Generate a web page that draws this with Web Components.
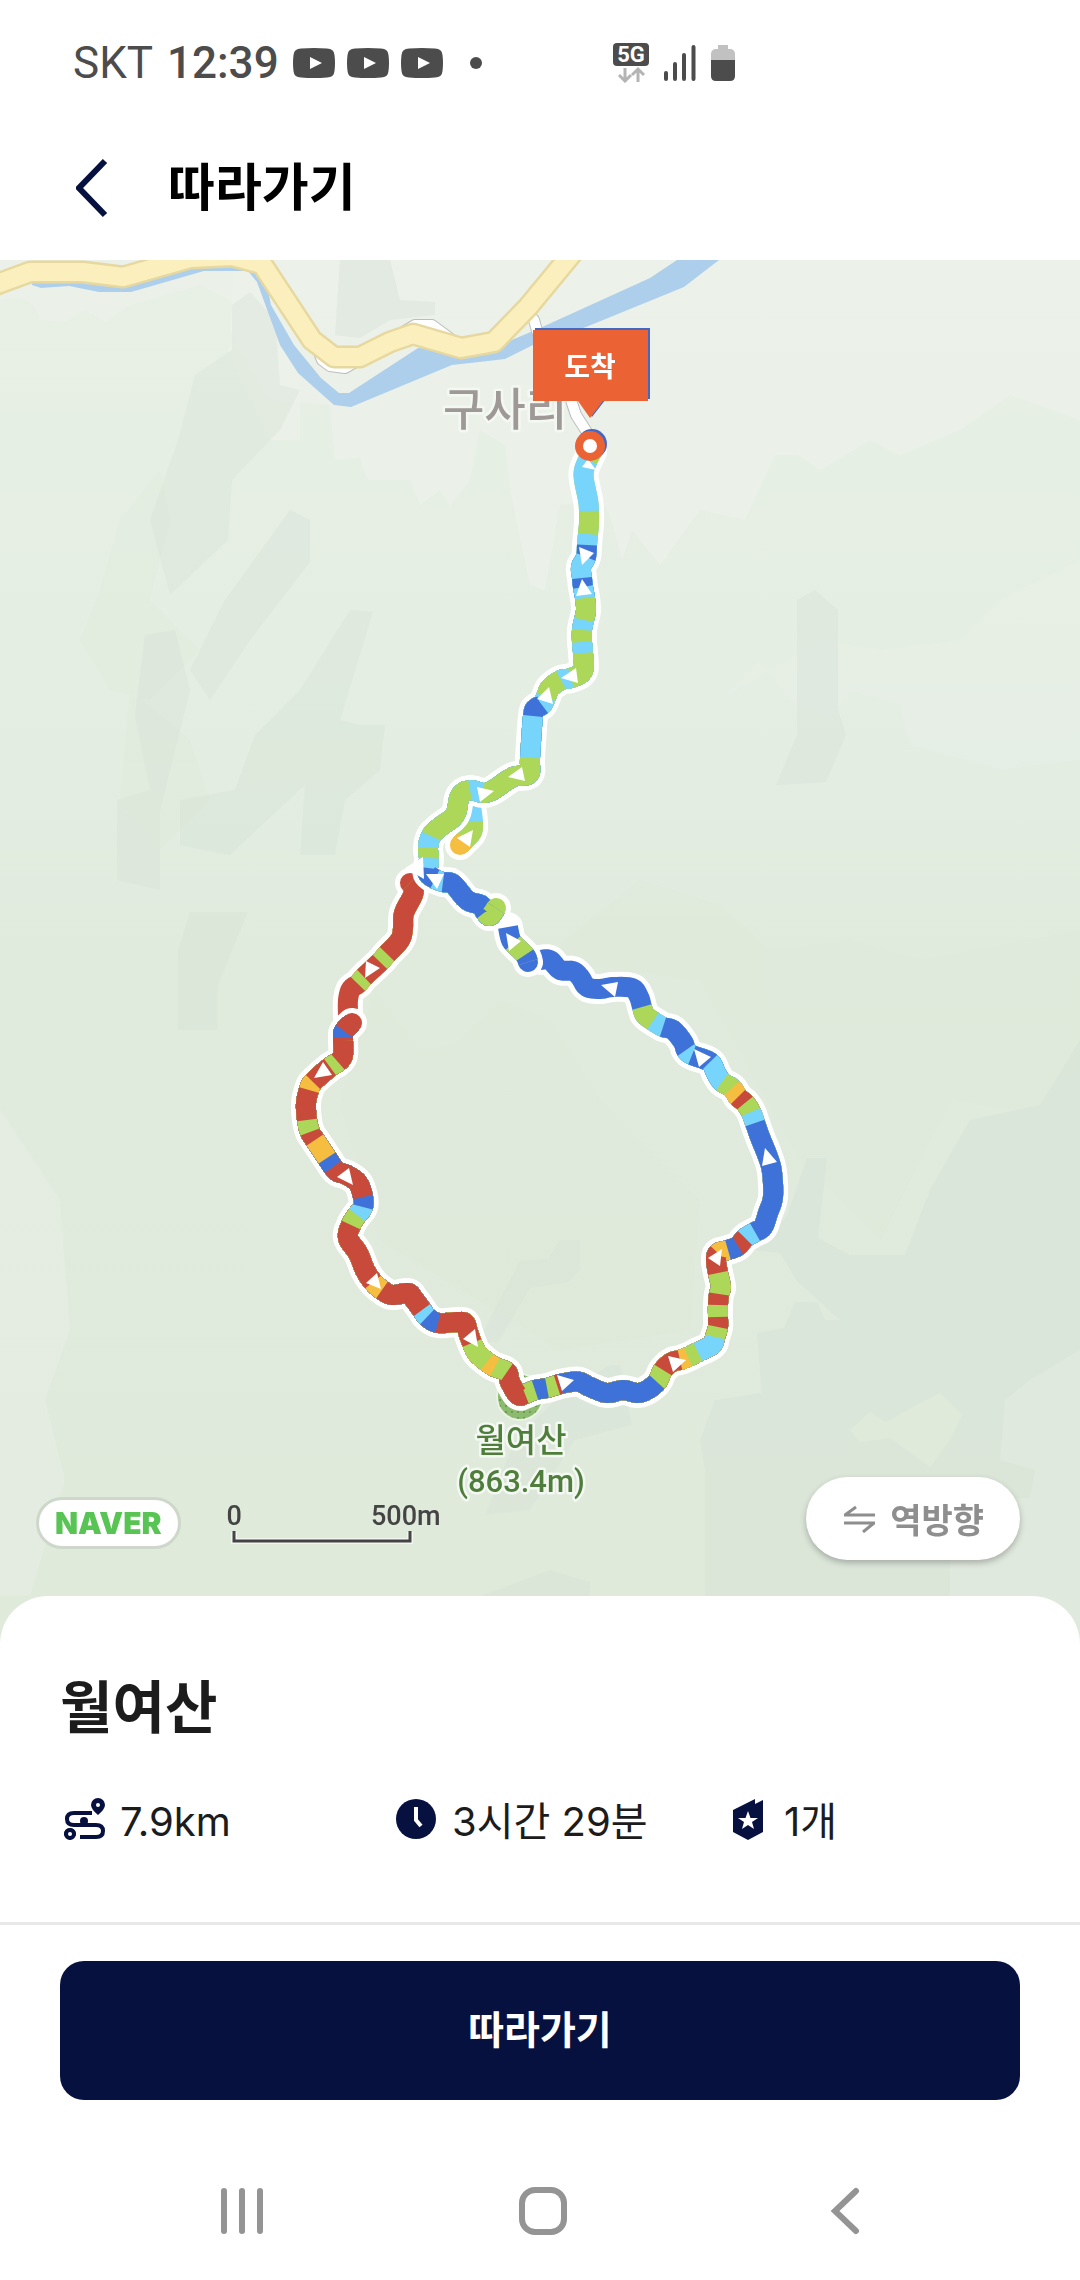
<!DOCTYPE html>
<html lang="ko">
<head>
<meta charset="utf-8">
<meta name="viewport" content="width=device-width, initial-scale=1">
<title>따라가기</title>
<style>
  body {
    margin: 0;
    background: #fff;
    font-family: Inter, "Noto Sans CJK KR", sans-serif;
    color: #1c1c1c;
  }
</style>
</head>
<body>
<follow-screen>
  <status-bar slot="top" carrier="SKT" time="12:39"></status-bar>
  <page-header slot="top">따라가기</page-header>
  <route-map slot="map"></route-map>
  <route-sheet slot="sheet">
    <span slot="title">월여산</span>
    <route-stat icon="distance">7.9km</route-stat>
    <route-stat icon="time">3시간 29분</route-stat>
    <route-stat icon="badge">1개</route-stat>
  </route-sheet>
  <action-bar slot="bottom">따라가기</action-bar>
  <system-nav slot="bottom"></system-nav>
</follow-screen>

<script>
// page frame: the map takes whatever height the bars leave
customElements.define("follow-screen", class extends HTMLElement {
  connectedCallback() {
    this.attachShadow({mode: 'open'});
    this.shadowRoot.innerHTML = `
    <style>
      :host { display: flex; flex-direction: column; min-height: 100vh; }
      main { flex: 1; display: flex; flex-direction: column; }
      ::slotted(route-map) { flex: 1; }
    </style>
    <slot name="top"></slot>
    <main>
      <slot name="map"></slot>
      <slot name="sheet"></slot>
    </main>
    <slot name="bottom"></slot>
    `;
  }
});

customElements.define("status-bar", class extends HTMLElement {
  connectedCallback() {
    const video = `
      <svg width="42" height="30" viewBox="0 0 42 30">
        <path d="M8 0.5Q21 -0.5 34 0.5Q41 0.5 41.500 7Q42.500 15 41.500 23Q41 29.500 34 29.500Q21 30.500 8 29.500Q1 29.500 0.500 23Q-0.500 15 0.500 7Q1 0.500 8 0.500Z" fill="#4c4c4c"/>
        <path d="M17 9L29 15L17 21Z" fill="#fff"/>
      </svg>`;
    this.attachShadow({mode: 'open'});
    this.shadowRoot.innerHTML = `
    <style>
      :host {
        display: flex;
        align-items: center;
        height: 126px;
        padding: 0 73px;
        font: 44px Roboto, sans-serif;
        color: #4c4c4c;
      }
      .time { font-weight: 500; margin: 0 14px; }
      .videos { display: flex; gap: 12px; margin-right: 27px; }
      .signals { display: flex; align-items: center; gap: 15px; margin-left: 131px; }
    </style>
    <span>${this.getAttribute('carrier')}</span>
    <span class="time">${this.getAttribute('time')}</span>
    <span class="videos">${video}${video}${video}</span>
    <svg width="12" height="12" viewBox="0 0 12 12"><circle cx="6" cy="6" r="6" fill="#4c4c4c"/></svg>
    <span class="signals">
      <svg width="36" height="40" viewBox="0 0 36 40">
        <rect width="36" height="23" rx="4" fill="#4c4c4c"/>
        <text x="18" y="19" text-anchor="middle" font-family="Roboto, sans-serif" font-size="22" font-weight="700" fill="#fff">5G</text>
        <path d="M12 25V38M6 32L12 38L18 32M25 39V26M19 32L25 26L31 32" fill="none" stroke="#b4b4b4" stroke-width="3"/>
      </svg>
      <svg width="32" height="36" viewBox="0 0 32 36">
        <path d="M2 28V34M11 19V34M20 10V34M29.500 2V34" stroke="#4c4c4c" stroke-width="4" stroke-linecap="round"/>
      </svg>
      <svg width="24" height="36" viewBox="0 0 24 36">
        <path d="M7 0H17V4H20Q24 5 24 9V16H0V9Q0 5 4 4H7Z" fill="#c1c1c1"/>
        <path d="M0 15H24V31Q24 36 19 36H5Q0 36 0 31Z" fill="#4c4c4c"/>
      </svg>
    </span>
    `;
  }
});

customElements.define("page-header", class extends HTMLElement {
  connectedCallback() {
    this.attachShadow({mode: 'open'});
    this.shadowRoot.innerHTML = `
    <style>
      :host {
        display: flex;
        align-items: center;
        gap: 32px;
        height: 124px;
        padding: 0 60px 10px;
      }
      button { display: flex; padding: 8px 16px; border: 0; background: none; cursor: pointer; }
      h1 { margin: 0; font-size: 51px; font-weight: 700; line-height: 72px; color: #000; }
    </style>
    <button aria-label="뒤로">
      <svg width="44" height="60" viewBox="0 0 44 60"><path d="M29 3L3 30L29 57" fill="none" stroke="#06113f" stroke-width="6"/></svg>
    </button>
    <h1><slot></slot></h1>
    `;
  }
});

const COLORS = {
  r: '#c84a3a',
  o: '#f5be41',
  g: '#acd759',
  c: '#77d4fb',
  b: '#3f72d8'
};

// each leg is a run of coloured parts, a part begins where the one before it ends
const LEGS = [
  `c 471,806 473,822 | g 472,832 465,840 | o 460,845`,

  `r 348,1016 348,1000 351,989 358,984 | g 364,977 | r 380,962 | g 387,954 |
   r 400,940 403,928 404,913 413,895 413,887 410,883`,

  `b 540,960 550,960 560,970 573,971 580,977 587,987 600,989 613,987 632,988 639,997 642,1007 |
   g 645,1015 653,1021 | c 663,1027 | b 673,1030 683,1042 686,1050 | c 692,1055 | b 710,1062 |
   c 716,1073 722,1082 | g 732,1088 | o 738,1097 | r 745,1103 | g 751,1112 | c 755,1123 |
   b 760,1137 768,1157 772,1172 773,1197 768,1213 763,1227 755,1232 | c 745,1238 | r 738,1246 |
   b 728,1250 | o 718,1253 | r 716,1260 718,1273 | g 721,1287 719,1294 | r 718,1305 | g 718,1317 |
   r 718,1327 | g 715,1337 | c 712,1345 698,1352 | g 688,1357 | o 680,1360 | r 672,1362 663,1370 |
   g 657,1382 | b 647,1390 637,1393 623,1390 607,1393 590,1387 580,1382 571,1382 560,1384 |
   r 557,1385 | g 547,1388 | b 535,1390 | g 525,1394 | r 518,1395 510,1382 507,1372 | g 495,1367 |
   o 487,1362 | g 477,1353 472,1343 | r 468,1332 465,1323 457,1322 438,1323 | b 427,1317 |
   c 422,1310 | r 413,1298 408,1293 392,1295 382,1290 | o 373,1282 | r 365,1270 358,1253 348,1238 351,1225 |
   g 357,1215 | c 363,1207 | b 363,1197 | r 358,1183 347,1175 338,1172 333,1167 | b 327,1158 |
   o 315,1140 | r 310,1132 | g 307,1120 | r 306,1103 309,1090 | o 313,1082 | r 330,1067 |
   g 338,1062 | r 343,1055 343,1038 | b 344,1031 | r 352,1023`,

  `b 508,927 510,937 513,943 | g 525,955 | b 528,962`,

  `g 592,452 588,460 | c 584,470 584,480 588,500 589,511 | g 589,523 588,534 | c 587,545 | b 586,557 |
   c 581,567 582,578 | b 583,587 | c 585,598 | g 586,610 584,620 | c 582,630 | g 582,642 | c 583,653 |
   g 583,671 571,678 | c 561,680 | g 550,688 546,697 | c 542,705 | b 536,708 533,716 | c 530,758 |
   g 529,774 513,777 493,790 483,793 | c 470,790 | g 460,796 455,815 440,827 431,836 | c 428,848 |
   g 429,858 | c 428,868 | b 428,874 435,879 | c 443,882 | b 453,884 467,900 481,905 485,912 |
   g 490,916 496,908`
];

const ARROWS = [
  '582,467 588,459 596,470', '579,547 594,553 582,565', '582,579 592,594 576,596',
  '561,678 576,668 578,683', '537,699 549,687 553,704', '508,777 522,767 525,781',
  '477,787 494,791 480,802', '457,838 473,830 470,847', '405,868 423,857 424,879',
  '426,874 444,874 437,889', '366,961 380,968 365,978', '314,1078 323,1062 332,1075',
  '506,933 521,941 509,951', '337,1177 349,1168 353,1185', '366,1283 377,1273 381,1289',
  '463,1339 475,1329 478,1347', '557,1375 574,1380 562,1391', '601,985 618,982 615,997',
  '694,1049 711,1057 699,1067', '765,1148 777,1162 762,1166', '708,1258 722,1249 720,1266',
  '668,1356 686,1360 673,1372'
];

const STEPS = 5;

// Catmull-Rom: STEPS samples for every stretch between two points
let smooth = (pts) => {
  let out = [];
  for (let i = 0; i < pts.length - 1; i++) {
    let p0 = pts[Math.max(i - 1, 0)];
    let p1 = pts[i];
    let p2 = pts[i + 1];
    let p3 = pts[Math.min(i + 2, pts.length - 1)];
    for (let s = 0; s < STEPS; s++) {
      let t = s / STEPS;
      out.push([0, 1].map(k => (2 * p1[k] + (p2[k] - p0[k]) * t
        + (2 * p0[k] - 5 * p1[k] + 4 * p2[k] - p3[k]) * t * t
        + (3 * p1[k] - p0[k] - 3 * p2[k] + p3[k]) * t * t * t) / 2));
    }
  }
  out.push(pts[pts.length - 1]);
  return out;
}

let drawLeg = (leg) => {
  let points = [];
  let parts = leg.split('|').map(part => {
    let [color, ...pts] = part.trim().split(/\s+/);
    let start = Math.max(points.length - 1, 0);
    points.push(...pts.map(p => p.split(',').map(Number)));
    return {color, start};
  });
  let curve = smooth(points);
  let casing = `<polyline points="${curve.join(' ')}" stroke="#fff" stroke-width="30" stroke-linecap="round"/>`;
  // every part runs on to the end of the leg, the next one is painted over it
  let cores = parts.map(({color, start}) => {
    let line = curve.slice(start * STEPS).join(' ');
    return `<polyline points="${line}" stroke="${COLORS[color]}" stroke-width="20" stroke-linecap="butt"/>`;
  }).join('');
  // half disc that rounds off the far end
  let [x, y] = curve[curve.length - 1];
  let [px, py] = curve[curve.length - 2];
  let a = Math.atan2(y - py, x - px);
  let dx = -Math.sin(a) * 10, dy = Math.cos(a) * 10;
  let cap = `<path d="M${x - dx} ${y - dy}A10 10 0 0 1 ${x + dx} ${y + dy}Z" fill="${COLORS[parts[parts.length - 1].color]}"/>`;
  return casing + cores + cap;
}

customElements.define("route-map", class extends HTMLElement {
  connectedCallback() {
    this.attachShadow({mode: 'open'});
    this.shadowRoot.innerHTML = `
    <style>
      :host { display: flex; flex-direction: column; justify-content: flex-end; position: relative; min-height: 600px; background: #e2ebdf; }
      .canvas { position: absolute; inset: 0; width: 100%; height: 100%; }
      .canvas text { font-family: "Noto Sans CJK KR", sans-serif; text-anchor: middle; }
      .canvas .height { font-family: Roboto, sans-serif; }
      .halo { paint-order: stroke; stroke: #f4f8f2; stroke-width: 5px; stroke-linejoin: round; }
      .controls {
        position: relative;
        display: flex;
        align-items: flex-end;
        justify-content: space-between;
        padding: 0 60px 84px 36px;
      }
      .left { display: flex; align-items: center; gap: 46px; margin-bottom: 11px; }
      .naver {
        padding: 0 16px;
        border: 3px solid #cdd8cb;
        border-radius: 26px;
        background: #fff;
        font: 900 30px/46px Inter, sans-serif;
        color: #58c454;
        text-decoration: none;
      }
      .scale { font: 500 27px/28px Roboto, sans-serif; color: #444; }
      .scale div { display: flex; justify-content: space-between; width: 214px; }
      .scale svg { display: block; margin-left: 4px; }
      button {
        display: flex;
        align-items: center;
        gap: 15px;
        padding: 0 36px 0 38px;
        border: 0;
        border-radius: 42px;
        background: #fff;
        box-shadow: 0 3px 6px rgba(0, 0, 0, 0.25);
        font: 700 34px/83px "Noto Sans CJK KR", sans-serif;
        color: #8e8e8e;
        cursor: pointer;
      }
    </style>
    <svg class="canvas" viewBox="0 260 1080 1384" preserveAspectRatio="xMidYMin slice" role="img" aria-label="월여산 코스 지도">
      <defs>
        <linearGradient id="land" x1="0" y1="0" x2="0" y2="1">
          <stop offset="0" stop-color="#e8f0e6"/>
          <stop offset="0.3" stop-color="#e5eee3"/>
          <stop offset="0.5" stop-color="#e0ebde"/>
          <stop offset="1" stop-color="#dfeadb"/>
        </linearGradient>
        <pattern id="dots" width="6" height="6" patternUnits="userSpaceOnUse">
          <circle cx="2" cy="2" r="1" fill="#5f9348"/>
        </pattern>
      </defs>
      <rect y="260" width="1080" height="1384" fill="url(#land)"/>

      <!-- pale slopes -->
      <g fill="#ecf1ea">
        <path d="M235 260H1080V420L1010 395L960 430L900 455L870 440L820 470L798 455L775 455L745 520L700 510L660 565L632 530L622 560L610 515L600 500L560 505L545 590L530 585L512 500L505 445L480 430L470 480L450 506L440 490L420 505L410 480L368 480L360 458L335 460L330 405L270 400L230 330Z" opacity="0.8"/>
        <path d="M0 300Q35 292 40 320L65 322L85 310L105 322L130 305L200 285L230 300L240 330L228 350L270 440L300 440V260H0Z" opacity="0.7"/>
        <path d="M720 700L760 660L790 700L830 720L850 690L900 705L910 745L1000 770L1080 760V560L1000 600L960 640L880 650L820 640Z" opacity="0.3"/>
        <path d="M0 1110L60 1200L70 1330L45 1400L65 1480L30 1596H0Z" opacity="0.4"/>
      </g>
      <g fill="#dde9d7" opacity="0.3">
        <path d="M120 520L160 470L170 520L150 600L200 650L150 700L110 690L80 640L100 590Z"/>
        <path d="M130 690L190 740L210 800L160 850L120 800Z"/>
        <path d="M540 960L640 880L720 905L770 950L850 940L920 960L1080 930V1120L950 1100L880 1240L800 1160L700 980Z"/>
        <path d="M375 990L420 1050L455 1045L500 1000L550 1020L600 1100L700 1200L690 1330L560 1350L380 1240L340 1100Z"/>
      </g>

      <!-- shaded ridges -->
      <g fill="#d6e0d6" opacity="0.4">
        <path d="M340 260H390L400 300L435 302V315L390 320L360 338L335 335Z"/>
        <path d="M232 305L250 292L275 320L280 385L300 390L280 430L232 480L228 540L170 595L150 520L178 440L195 375L232 350Z" opacity="0.8"/>
        <path d="M290 510L310 520V562L250 640L210 700L190 670L225 600Z"/>
        <path d="M350 610L373 612L340 720L360 725L385 725L380 770L345 800L335 855H300L305 785L230 855L180 845V800L235 790L255 735L300 690Z" opacity="0.8"/>
        <path d="M145 635L175 630L190 690L160 810V890L117 880V800L150 790L135 715Z"/>
        <path d="M190 912L248 912L218 985L217 1030H178V950Z" opacity="0.8"/>
        <path d="M797 600L815 590L838 610V710L846 735L826 782L776 785L797 735Z"/>
        <path d="M478 1342L498 1342L530 1288L568 1282L580 1270V1240H560L548 1259L520 1261Z"/>
      </g>
      <g fill="#d8e3d8" opacity="0.65">
        <path d="M807 1158H827L818 1238L850 1255L905 1255L930 1190L970 1120L1040 1105L1080 1040V1644H705V1470L700 1440L715 1400L762 1393L757 1333L784 1328L795 1302H817L825 1320H840L820 1302L797 1281L780 1253L755 1250L787 1216Z"/>
        <path d="M480 1596L550 1570L590 1582V1644H480Z" opacity="0.7"/>
        <path d="M560 1395L610 1365H620L632 1425L575 1440L530 1510L485 1515L515 1440Z" opacity="0.7"/>
      </g>
      <path d="M850 1430L870 1412L885 1422L940 1393L962 1415L950 1440L930 1467L890 1438L860 1442Z" fill="#dfeadb"/>
      <path d="M950 1644V1500L1030 1498L1035 1470L1000 1460L1005 1400L1030 1380L1080 1350V1644Z" fill="#e2ebdf" opacity="0.6"/>

      <!-- river -->
      <path d="M30 272L32 285L41 288L69 286L99 292H131L204 271H248L257 282L280 345L298 373L334 405L351 407L452 365L505 359L537 343L586 327L684 287L719 260H677L650 278L540 328L500 345L461 350L418 348L349 393H339L321 378L294 345L271 305L262 260Z" fill="#aecfec"/>

      <!-- lanes -->
      <g fill="none" stroke-linejoin="round">
        <g stroke="#bdbdbd" stroke-width="12">
          <path d="M400 334L415 325L432 325L455 342"/>
          <path d="M316 345L322 360L330 366L345 368L362 358"/>
          <path d="M526 310L534 320L541 345M571 400L576 415L592 440"/>
        </g>
        <g stroke="#fff" stroke-width="10">
          <path d="M400 334L415 325L432 325L455 342"/>
          <path d="M316 345L322 360L330 366L345 368L362 358"/>
          <path d="M526 310L534 320L541 345M571 400L576 415L592 440"/>
        </g>
        <path d="M-10 287L0 283L30 272H83L123 277L190 258L232 256L262 264L312 340L334 357H360L390 342L413 334L461 348L494 342L528 307L575 250" stroke="#e6d89e" stroke-width="23"/>
        <path d="M-10 287L0 283L30 272H83L123 277L190 258L232 256L262 264L312 340L334 357H360L390 342L413 334L461 348L494 342L528 307L575 250" stroke="#fbf0bd" stroke-width="18"/>
      </g>

      <text class="halo" x="505" y="426" font-size="45" font-weight="500" fill="#9e9997">구사리</text>

      <!-- summit -->
      <circle cx="520" cy="1397" r="23" fill="#8cba6e" stroke="#e9f2e4" stroke-width="2"/>
      <circle cx="520" cy="1397" r="22" fill="url(#dots)"/>
      <text class="halo" x="521" y="1452" font-size="33" font-weight="500" fill="#4f7d3c">월여산</text>
      <text class="halo height" x="521" y="1492" font-size="31" font-weight="500" fill="#4f7d3c">(863.4m)</text>

      <g fill="none" stroke-linejoin="round">${LEGS.map(drawLeg).join('')}</g>
      <g fill="#fff">${ARROWS.map(points => `<polygon points="${points}"/>`).join('')}</g>

      <!-- start pin sits under the finish pin -->
      <g fill="#4468c0">
        <path d="M535 328H650V399H606L592 417L580 399H535Z"/>
        <circle cx="592" cy="444" r="15"/>
      </g>
      <g fill="#eb6235">
        <path d="M533 330H648V401H603L590 418L578 401H533Z"/>
        <circle cx="590" cy="446" r="15"/>
      </g>
      <circle cx="590" cy="446" r="7" fill="#fff"/>
      <text x="590" y="377" font-size="28" font-weight="700" fill="#fff">도착</text>
    </svg>
    <div class="controls">
      <div class="left">
        <a class="naver" href="#naver">NAVER</a>
        <div class="scale">
          <div><span>0</span><span>500m</span></div>
          <svg width="182" height="14" viewBox="0 0 182 14"><path d="M3 2V11H179V2" fill="none" stroke="#f2f6f0" stroke-width="6"/><path d="M3 1V11H179V1" fill="none" stroke="#444" stroke-width="3"/></svg>
        </div>
      </div>
      <button>
        <svg width="31" height="28" viewBox="0 0 31 28"><path d="M0 10H31M0 18H31M1 10L12 2M30 18L19 27" fill="none" stroke="#8e8e8e" stroke-width="3"/></svg>
        역방향
      </button>
    </div>
    `;
  }
});

const ICONS = {
  distance: `
    <g fill="none" stroke="#06113f" stroke-width="4">
      <path d="M32 18H14Q7 18 7 24Q7 30 14 30H36Q43 30 43 36Q43 42 36 42H20"/>
      <circle cx="10" cy="39" r="4"/>
    </g>
    <path d="M4 39A6 6 0 0 1 16 39Q16 42 10 45Q4 42 4 39ZM38 3A7 7 0 0 1 45 10Q45 14 38 20Q31 14 31 10A7 7 0 0 1 38 3Z" fill="#06113f"/>
    <circle cx="38" cy="10" r="2" fill="#fff"/>
    <circle cx="10" cy="39" r="2" fill="#fff"/>
    <circle cx="24" cy="26" r="4" fill="#06113f"/>`,
  time: `
    <circle cx="24" cy="24" r="20" fill="#06113f"/>
    <path d="M24 12V25L29 31" fill="none" stroke="#fff" stroke-width="4"/>`,
  badge: `
    <path d="M9 15L31 4V9L39 5V37L24 45L9 37Z" fill="#06113f"/>
    <path d="M24 16L26.500 23H34L28 27L30 34L24 30L18 34L20 27L14 23H21.500Z" fill="#fff"/>`
};

customElements.define("route-stat", class extends HTMLElement {
  connectedCallback() {
    this.attachShadow({mode: 'open'});
    this.shadowRoot.innerHTML = `
    <style>
      :host { display: flex; align-items: flex-start; gap: 12px; font-size: 40px; line-height: 54px; height: 48px; white-space: nowrap; }
      svg { flex: none; }
    </style>
    <svg width="48" height="48" viewBox="0 0 48 48">${ICONS[this.getAttribute('icon')]}</svg>
    <span><slot></slot></span>
    `;
  }
});

customElements.define("route-sheet", class extends HTMLElement {
  connectedCallback() {
    this.attachShadow({mode: 'open'});
    this.shadowRoot.innerHTML = `
    <style>
      :host {
        display: block;
        position: relative;
        margin-top: -48px;
        padding: 76px 60px 79px;
        border-radius: 48px 48px 0 0;
        background: #fff;
      }
      h2 { margin: 0 0 51px; font-size: 57px; font-weight: 700; line-height: 72px; }
      .stats { display: grid; grid-template-columns: repeat(3, 1fr); gap: 36px; }
    </style>
    <h2><slot name="title"></slot></h2>
    <div class="stats"><slot></slot></div>
    `;
  }
});

customElements.define("action-bar", class extends HTMLElement {
  connectedCallback() {
    this.attachShadow({mode: 'open'});
    this.shadowRoot.innerHTML = `
    <style>
      :host { display: block; padding: 36px 60px 0; border-top: 3px solid #e8e8e8; }
      button {
        display: block;
        width: 100%;
        height: 139px;
        padding: 0 0 8px;
        border: 0;
        border-radius: 24px;
        background: #06113f;
        color: #fff;
        font: 700 39px/56px "Noto Sans CJK KR", sans-serif;
        cursor: pointer;
      }
    </style>
    <button><slot></slot></button>
    `;
  }
});

customElements.define("system-nav", class extends HTMLElement {
  connectedCallback() {
    this.attachShadow({mode: 'open'});
    this.shadowRoot.innerHTML = `
    <style>
      :host { display: grid; grid-template-columns: repeat(3, 1fr); padding: 87px 84px 45px 91px; }
      button { display: flex; justify-content: center; padding: 0; border: 0; background: none; cursor: pointer; }
      svg { fill: none; stroke: #949494; stroke-width: 6; stroke-linecap: round; }
    </style>
    <button aria-label="최근 앱"><svg width="48" height="48" viewBox="0 0 48 48"><path d="M6 4V44M24 4V44M42 4V44"/></svg></button>
    <button aria-label="홈"><svg width="48" height="48" viewBox="0 0 48 48"><rect x="3" y="3" width="42" height="42" rx="13"/></svg></button>
    <button aria-label="뒤로"><svg width="48" height="48" viewBox="0 0 48 48"><path d="M35 4L14 24L35 44"/></svg></button>
    `;
  }
});
</script>
</body>
</html>
